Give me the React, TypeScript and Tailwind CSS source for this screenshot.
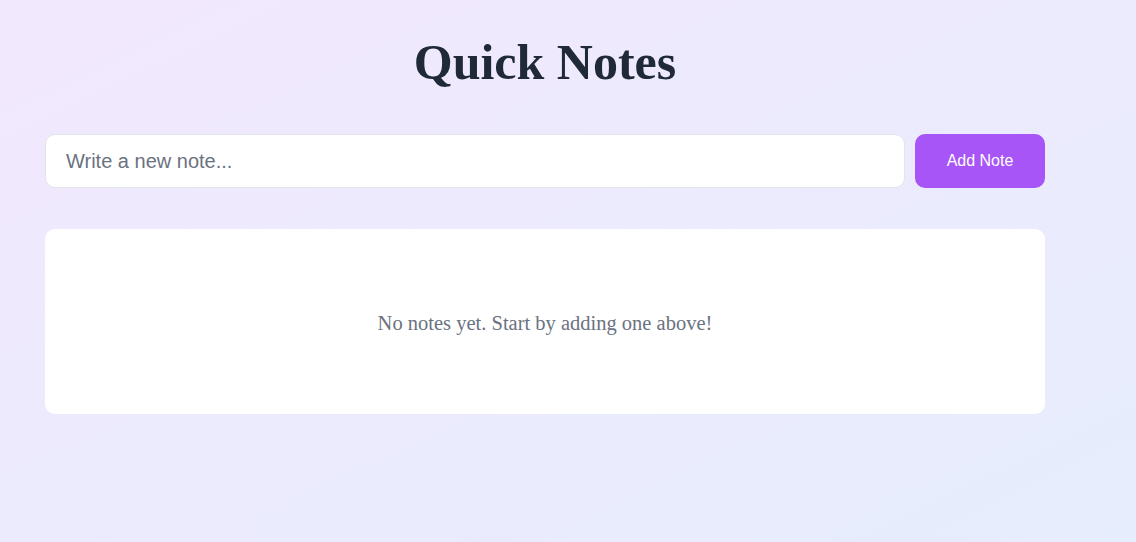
import React, { useState } from "react";

export default function App() {
  const [text, setText] = useState("");
  const [notes, setNotes] = useState<string[]>([]);

  const addNote = () => {
    if (!text.trim()) return;
    setNotes([text.trim(), ...notes]);
    setText("");
  };

  return (
    <div className="min-h-screen w-full bg-gradient-to-br from-[#f2e8fe] to-[#e6edfd] pt-[30px]">
      <div className="w-[1000px] ml-[45px]">
        <h1
          className="text-center text-[50px] leading-[64px] font-bold text-[#1f2937]"
          style={{ fontFamily: '"Liberation Serif", serif' }}
        >
          Quick Notes
        </h1>

        <div className="mt-[40px] flex gap-[10px]">
          <input
            value={text}
            onChange={(e) => setText(e.target.value)}
            placeholder="Write a new note..."
            className="flex-1 h-[54px] rounded-[10px] border border-[#e2e4ea] bg-white px-5 text-[20px] text-[#1f2937] placeholder:text-[#6b7280] outline-none"
            style={{ fontFamily: '"Liberation Sans", Arial, sans-serif' }}
          />
          <button
            onClick={addNote}
            className="w-[130px] h-[54px] rounded-[10px] bg-[#a855f7] text-white text-[16px]"
            style={{ fontFamily: '"Liberation Sans", Arial, sans-serif' }}
          >
            Add Note
          </button>
        </div>

        <div className="mt-[41px] rounded-[10px] bg-white">
          {notes.length === 0 ? (
            <p
              className="h-[185px] pt-[4px] flex items-center justify-center text-[20.5px] text-[#6b7280]"
              style={{ fontFamily: '"Liberation Serif", serif' }}
            >
              No notes yet. Start by adding one above!
            </p>
          ) : (
            <ul className="p-5 flex flex-col gap-3">
              {notes.map((n, i) => (
                <li key={i} className="text-[18px] text-[#1f2937]">
                  {n}
                </li>
              ))}
            </ul>
          )}
        </div>
      </div>
    </div>
  );
}
